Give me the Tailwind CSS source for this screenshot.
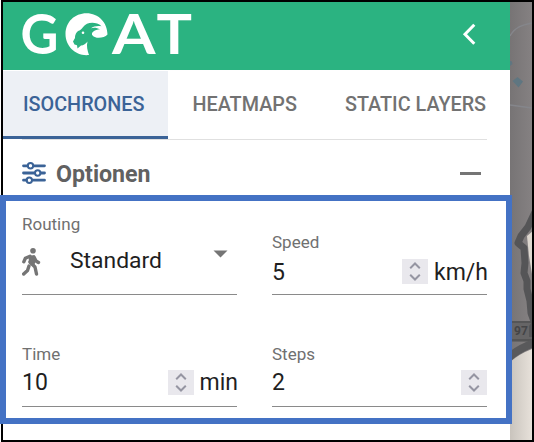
<!DOCTYPE html>
<html lang="en">
<head>
<meta charset="utf-8">
<title>GOAT</title>
<script src="https://cdn.jsdelivr.net/npm/@tailwindcss/browser@4"></script>
</head>
<body class="bg-white">
<div class="relative h-[442px] w-[534px] overflow-hidden font-[Roboto,sans-serif] text-[#1f1f1f]">
  <div class="ml-px flex h-[442px] w-[533px] border-2 border-black">
    <main class="w-[507px] shrink-0 bg-white">
      <header class="flex h-[68px] items-start justify-between bg-[#2bb381]">
        <svg class="ml-[17px] h-[68px] w-[175px] overflow-visible" viewBox="20 2 175 68" role="img" aria-label="GOAT">
          <g fill="#fff" font-family="Lato, sans-serif" font-weight="700" font-size="55">
            <text x="20.500" y="54" textLength="38" lengthAdjust="spacingAndGlyphs">G</text>
            <text x="112" y="54" textLength="43.500" lengthAdjust="spacingAndGlyphs">A</text>
            <text x="156.500" y="54" textLength="35.500" lengthAdjust="spacingAndGlyphs">T</text>
          </g>
          <path fill="#fff" d="M89 55C76 56.500 65.500 46.500 65.500 34C65.500 22 74.500 13.200 86.500 13.200C98.500 13.200 107.500 22.500 107.500 34.500C104 38.300 95 39.500 92 34.800C91.500 32 94.500 29.800 100 29.300C97 27.500 93.500 27.300 91 28.200C93.500 26.200 97.500 25.500 101.500 26.200C97.500 22.300 91 22.200 87 23.700C83.500 25.500 82.500 28.500 80 30.300C76 31.500 75 35.500 75 38L73 41.500L74.500 44.600L77 45.300L77.500 48.500L81 45.500C83.500 45.500 86 43.800 87.500 41.500C86.200 46 87.500 50.500 89 55Z"/>
          <circle cx="83" cy="32.800" r="1.300" fill="#fff"/>
        </svg>
        <svg class="mt-[21px] mr-[34px] h-[23px] w-[14px]" viewBox="0 0 14 23" fill="none" stroke="#fff" stroke-width="3"><path d="M12.300 1.800 3 11.300l9.300 9.500"/></svg>
      </header>
      <nav class="relative flex h-[69px] items-start pt-px text-[19.800px] leading-none font-medium text-[#727272]">
        <div class="flex h-[68px] w-[165px] items-center border-b-[3px] border-[#3b6397] bg-[#edf0f5] pt-[2px] pl-[20px] text-[#3b6397]"><span class="w-[123px] whitespace-nowrap">ISOCHRONES</span></div>
        <div class="flex h-[68px] items-center border-b-[3px] border-transparent pt-[2px] pl-[24.500px]"><span class="w-[108px] whitespace-nowrap">HEATMAPS</span></div>
        <div class="flex h-[68px] items-center border-b-[3px] border-transparent pt-[2px] pl-[44.500px]"><span class="whitespace-nowrap">STATIC LAYERS</span></div>
      </nav>
      <div class="mr-[23px] ml-[19px] h-px bg-[#e0e0e0]"></div>
      <section class="flex h-[56px] items-center pt-[10px] pl-[19px]">
        <svg class="h-[22px] w-[24px]" viewBox="0 0 24 22" fill="none" stroke="#3b6397" stroke-linecap="round" stroke-width="2.800">
          <path d="M1.500 3.800h4M12 3.800h10.500M1.500 11h10.700M19 11h3.500M1.500 18.200h3M11 18.200h11.500"/>
          <circle cx="8.500" cy="3.800" r="2.700" stroke-width="2"/><circle cx="15.700" cy="11" r="2.700" stroke-width="2"/><circle cx="7.300" cy="18.200" r="2.700" stroke-width="2"/>
        </svg>
        <h2 class="ml-[10px] pt-[3px] text-[23.200px] leading-none font-bold text-[#616161]">Optionen</h2>
        <div class="mr-[29px] ml-auto h-[3px] w-[21px] bg-[#757575]"></div>
      </section>
      <form class="grid grid-cols-[215px_215px] gap-x-[35px] pl-[19px]">
        <div class="h-[99px] border-b border-[#8a8a8a] pt-[18px]">
          <div class="text-[17px] leading-[20px] text-[#707070]">Routing</div>
          <div class="flex h-[50px] items-center">
            <svg class="mt-[6px] h-[30px] w-[20px]" viewBox="0 0 20 30" fill="none" stroke="#757575" stroke-linecap="round" stroke-linejoin="round">
              <circle cx="11" cy="3.700" r="2.800" fill="#757575" stroke="none"/>
              <path fill="#757575" stroke-width="1.500" d="M7.500 9.300 12 8.900 13 12l-1.500 7-4-3z"/>
              <path stroke-width="3.400" d="M8 9.300 3.300 11.300 1.800 14.800M12 10l2 4 2.500 1.500M8 15l5 5 1.500 7M7 19l-1.500 4.500L1.700 27"/>
            </svg>
            <span class="mt-[4px] ml-[28px] text-[22.900px] leading-none">Standard</span>
            <svg class="mr-[9px] mb-[11px] ml-auto h-[8px] w-[15px]" viewBox="0 0 15 8"><path fill="#757575" d="M.5.500h14L7.500 7.500z"/></svg>
          </div>
        </div>
        <div class="h-[99px] border-b border-[#8a8a8a] pt-[36px]">
          <div class="text-[17px] leading-[20px] text-[#707070]">Speed</div>
          <div class="flex h-[38px] items-center text-[23px] leading-none">
            <span class="pt-[2px]">5</span>
            <span class="ml-auto flex h-[25px] w-[26px] items-center justify-center bg-[#e9e8ed]"><svg class="h-[19px] w-[12px]" viewBox="0 0 12 19" fill="none" stroke="#9595a2" stroke-width="2"><path d="m1.200 6.200 4.800-4.700 4.800 4.700M1.200 12.800 6 17.500l4.800-4.700"/></svg></span>
            <span class="ml-[6px] w-[53px] pt-[2px] whitespace-nowrap">km/h</span>
          </div>
        </div>
        <div class="h-[112px] border-b border-[#8a8a8a] pt-[49px]">
          <div class="text-[17px] leading-[20px] text-[#707070]">Time</div>
          <div class="flex h-[36px] items-center text-[23px] leading-none">
            <span>10</span>
            <span class="ml-auto flex h-[25px] w-[26px] items-center justify-center bg-[#e9e8ed]"><svg class="h-[19px] w-[12px]" viewBox="0 0 12 19" fill="none" stroke="#9595a2" stroke-width="2"><path d="m1.200 6.200 4.800-4.700 4.800 4.700M1.200 12.800 6 17.500l4.800-4.700"/></svg></span>
            <span class="ml-[6px] w-[37.500px] whitespace-nowrap">min</span>
          </div>
        </div>
        <div class="h-[112px] border-b border-[#8a8a8a] pt-[49px]">
          <div class="text-[17px] leading-[20px] text-[#707070]">Steps</div>
          <div class="flex h-[36px] items-center text-[23px] leading-none">
            <span>2</span>
            <span class="ml-auto flex h-[25px] w-[26px] items-center justify-center bg-[#e9e8ed]"><svg class="h-[19px] w-[12px]" viewBox="0 0 12 19" fill="none" stroke="#9595a2" stroke-width="2"><path d="m1.200 6.200 4.800-4.700 4.800 4.700M1.200 12.800 6 17.500l4.800-4.700"/></svg></span>
          </div>
        </div>
      </form>
    </main>
    <svg class="h-[438px] w-[22px] shrink-0" viewBox="510 2 22 438">
      <defs>
        <linearGradient id="shade"><stop stop-color="#777475"/><stop offset="1" stop-color="#858182"/></linearGradient>
        <linearGradient id="sand"><stop stop-color="#c9c4bd"/><stop offset="1" stop-color="#e7e1da"/></linearGradient>
      </defs>
      <path fill="url(#shade)" d="M510 2h22v438h-22z"/>
      <path fill="none" stroke="#85868b" stroke-width="1.500" d="M510 36c5-9 12-11 22-13M510 105l22 3"/>
      <path fill="#5f7681" d="m512.500 81 5-4 5.500 4.500-4.500 6zM510 61h1.500l1 3-2.500 2z"/>
      <path fill="#ddd7cf" d="M533 231l-6 5 2 20 4 24z"/>
      <path fill="none" stroke="#555557" stroke-width="7" stroke-linejoin="round" d="M535 212l-7 15-7 9-3 7 6 5 1 15-1 10 3 8 0 8 3 12 1 12 5 14"/>
      <path fill="#666566" d="M510 321h22v21h-22z"/>
      <path stroke="#505052" stroke-width="1.500" d="M510 322h22M510 340h22"/>
      <text x="514" y="335" font-family="Roboto, sans-serif" font-size="12" font-weight="700" fill="#444446">97</text>
      <path fill="#555557" d="M529 326l3-4v15h-3z"/>
      <path fill="url(#sand)" d="M510 362q9-8 22-13v91h-22z"/>
      <path fill="none" stroke="#59595b" stroke-width="8" d="M508 358q10-9 26-15"/>
    </svg>
  </div>
  <div class="pointer-events-none absolute top-[195px] left-0 h-[229px] w-[512px] border-[6px] border-[#4472c4]"></div>
</div>
</body>
</html>
